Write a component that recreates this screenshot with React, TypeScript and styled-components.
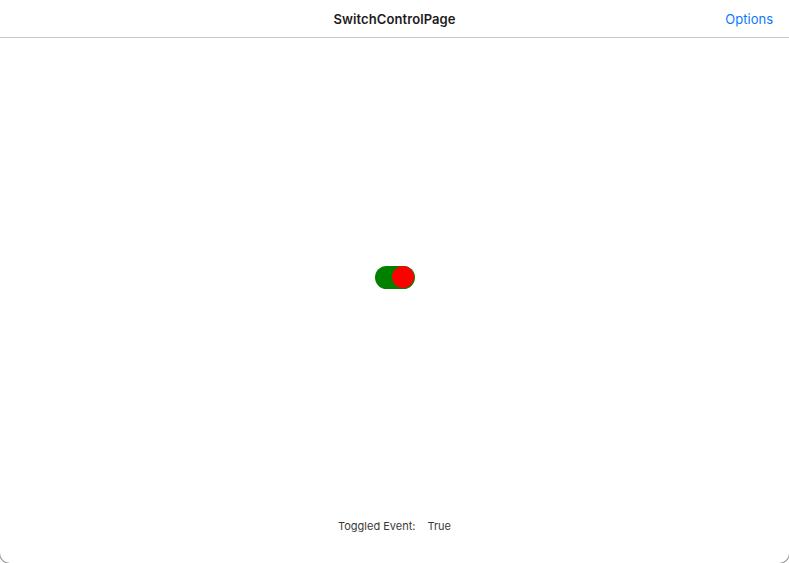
import React, { useState } from "react";
import styled, { createGlobalStyle } from "styled-components";

const GlobalStyle = createGlobalStyle`
  html, body {
    margin: 0;
    padding: 0;
    background: #ffffff;
    overflow: hidden;
  }
  body {
    font-family: Inter, "Liberation Sans", Arial, sans-serif;
  }
`;

const Window = styled.div`
  width: 789px;
  height: 563px;
  box-sizing: border-box;
  display: flex;
  flex-direction: column;
  background: #ffffff;
  border-radius: 0 0 10px 10px;
  box-shadow: 0 0 0 1px #9a9a9a;
  overflow: hidden;
`;

const NavBar = styled.header`
  height: 37px;
  flex: 0 0 auto;
  display: grid;
  grid-template-columns: 1fr auto 1fr;
  align-items: center;
  border-bottom: 1px solid #c6c6c8;
  padding: 0 16px;
`;

const Title = styled.h1`
  grid-column: 2;
  margin: 0;
  font-size: 13px;
  font-weight: 600;
  color: #1c1c1e;
  letter-spacing: 0.1px;
`;

const NavButton = styled.button`
  grid-column: 3;
  justify-self: end;
  border: none;
  background: none;
  padding: 0;
  font-family: inherit;
  font-size: 13px;
  color: #0a7aff;
  cursor: pointer;
`;

const Content = styled.main`
  flex: 0 0 478px;
  display: flex;
  align-items: center;
  justify-content: center;
`;

const Track = styled.button<{ $on: boolean }>`
  width: 40px;
  height: 23px;
  border: none;
  border-radius: 12px;
  padding: 1px;
  display: flex;
  align-items: center;
  justify-content: ${({ $on }) => ($on ? "flex-end" : "flex-start")};
  background: ${({ $on }) => ($on ? "#008000" : "#e5e5ea")};
  cursor: pointer;
  margin-top: 0;
`;

const Thumb = styled.span`
  width: 22px;
  height: 22px;
  border-radius: 50%;
  background: #ff0000;
`;

const Footer = styled.footer`
  flex: 1;
  display: flex;
  justify-content: center;
  gap: 12px;
  padding-top: 3px;
  font-size: 11px;
  line-height: 14px;
  color: #3a3a3c;
`;

export default function App() {
  const [on, setOn] = useState(true);
  return (
    <>
      <GlobalStyle />
      <Window>
        <NavBar>
          <Title>SwitchControlPage</Title>
          <NavButton>Options</NavButton>
        </NavBar>
        <Content>
          <Track $on={on} onClick={() => setOn(!on)}>
            <Thumb />
          </Track>
        </Content>
        <Footer>
          <span>Toggled Event:</span>
          <span>{on ? "True" : "False"}</span>
        </Footer>
      </Window>
    </>
  );
}
